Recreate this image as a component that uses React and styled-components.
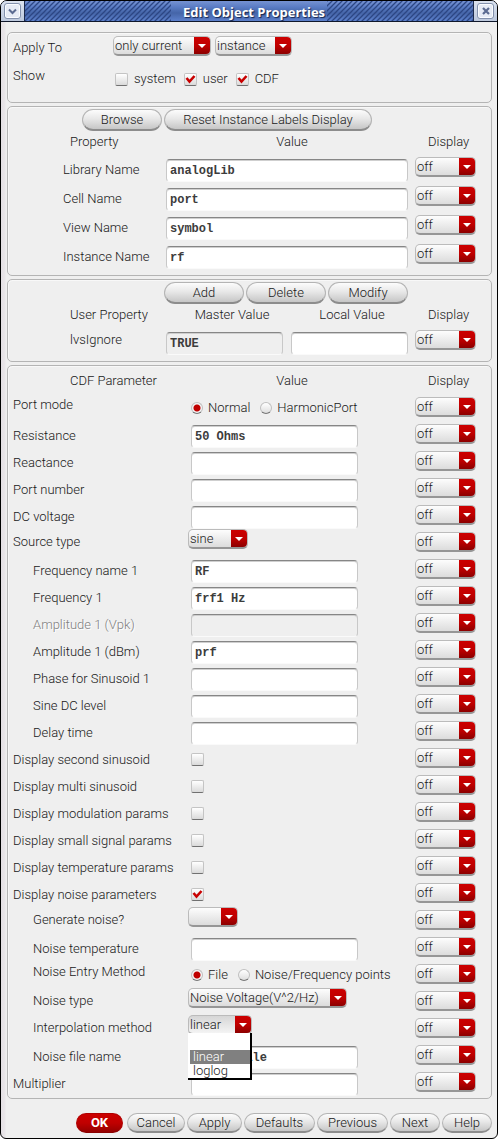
import React from "react";
import styled, { createGlobalStyle } from "styled-components";

const GlobalStyle = createGlobalStyle`
  *, *::before, *::after { box-sizing: border-box; }
  body {
    margin: 0;
    background: #fff;
    color: #181818;
    font: 300 13px/16px Roboto, "Liberation Sans", sans-serif;
  }
  button, select { font: inherit; color: inherit; }
`;

const Window = styled.div`
  border: 1px solid #000;
  border-radius: 7px 7px 6px 6px;
  overflow: hidden;
  background: linear-gradient(90deg, #e4e0e4 0, #e9e6e9 4px, #efefef 5px);
`;

const TitleBar = styled.header`
  display: flex;
  height: 21px;
  border-bottom: 1px solid #10182c;
  background: linear-gradient(#7592d2, #5a7cc4 30%, #4565a8 60%, #5c80cc);
`;

const TitleEnd = styled.div`
  display: flex;
  align-items: center;
  justify-content: center;
  width: 24px;
  background: linear-gradient(#dce3ef, #bcc8dc);
  border: solid #1c2a4c;
  border-width: ${(p) => (p.$right ? "0 0 0 1px" : "0 1px 0 0")};
`;

const TitleButton = styled.button`
  display: flex;
  align-items: center;
  justify-content: center;
  width: 17px;
  height: 16px;
  padding: 0;
  border: 1px solid #8391ad;
  border-radius: 3px;
  background: #e6ebf5;
  box-shadow: inset 0 0 0 1px #fafcff;
`;

const StripeArea = styled.svg`
  flex: 1;
  min-width: 0;
  height: 20px;
`;

const Title = styled.h1`
  margin: 0;
  padding: 0 2px 0 12px;
  font: bold 13px/22px "Open Sans", "DejaVu Sans", sans-serif;
  color: #fff;
  text-shadow: 1px 1px 1px #16254c;
  white-space: nowrap;
`;

const Form = styled.form`
  display: flex;
  flex-direction: column;
  gap: 3px;
  padding: 10px 5px 5px 6px;
`;

const Panel = styled.section`
  border: 1px solid #b4b4b4;
  border-radius: 5px;
  padding: 2px 0 ${(p) => p.$bottom}px;
  box-shadow: inset 1px 1px #f8f8f8;
`;

const Heading = styled.div`
  display: grid;
  grid-template-columns: 158px minmax(0, 1fr) 83px;
  align-items: center;
  height: ${(p) => p.$height}px;
`;

const HeadingName = styled.span`
  padding-left: 62px;
`;

const HeadingValues = styled.span`
  display: flex;
  gap: 8px;
  padding-left: 10px;
  > span { flex: 1; text-align: center; }
`;

const HeadingDisplay = styled.span`
  padding-left: 20px;
`;

const PropertyRow = styled.div`
  display: grid;
  grid-template-columns: 151px minmax(0, 1fr) 76px;
  column-gap: 7px;
  align-items: start;
  height: 29px;
  > :last-child { margin-top: 5px; }
`;

const PropertyLabel = styled.label`
  padding: ${(p) => (p.$user ? "7px 0 0 62px" : "10px 0 0 55px")};
`;

const PropertyValues = styled.div`
  display: flex;
  gap: 8px;
  padding-top: 7px;
`;

const labelTop = { text: 7, radio: 3, select: 5, check: 7 };
const valuePadding = { text: "4px 0 0 3px", radio: "6px 0 0 3px", select: "0", check: "8px 0 0 3px" };

const ParamRow = styled.div`
  display: grid;
  grid-template-columns: 175px minmax(0, 1fr) 76px;
  align-items: start;
  height: 27px;
  padding-left: 5px;
  > :last-child { margin-top: 3px; }
`;

const ParamLabel = styled.label`
  padding: ${(p) => labelTop[p.$kind]}px 0 0 ${(p) => (p.$indent ? 20 : 0)}px;
  color: ${(p) => (p.$dim ? "#808080" : "inherit")};
  text-shadow: ${(p) => (p.$dim ? "1px 1px #fff" : "none")};
  white-space: nowrap;
`;

const ParamValue = styled.div`
  display: flex;
  gap: 10px;
  padding: ${(p) => valuePadding[p.$kind]};
`;

const TextBox = styled.input`
  flex: ${(p) => (p.$narrow ? "0 1 167px" : "1")};
  min-width: 0;
  height: 23px;
  margin: 0;
  padding: 0 3px 0 3px;
  border: 1px solid #c8c8c8;
  border-top-color: #868686;
  border-bottom-color: #fafafa;
  border-radius: 4px;
  background: #fff;
  box-shadow: inset 0 1px #cfcfcf;
  color: #3c3c3c;
  font: bold 12px/16px "Liberation Mono", monospace;
  &:read-only { background: #efefef; }
`;

const SelectFrame = styled.span`
  position: relative;
  display: inline-block;
  width: ${(p) => p.$width}px;
  height: 20px;
  &::before {
    content: "";
    position: absolute;
    top: 1px;
    right: 1px;
    width: 16px;
    height: 17px;
    border-radius: 0 4px 4px 0;
    background: linear-gradient(#cc0000, #c00000 50%, #8c0000);
    pointer-events: none;
  }
  &::after {
    content: "";
    position: absolute;
    top: 8px;
    right: 5px;
    border: solid transparent;
    border-width: 4px 4px 0;
    border-top-color: #fff;
    pointer-events: none;
  }
`;

const SelectControl = styled.select`
  display: block;
  appearance: none;
  width: 100%;
  height: 20px;
  margin: 0;
  padding: 0 16px 0 1px;
  border: 1px solid #bbb;
  border-bottom: 2px solid #969696;
  border-radius: 5px;
  background: ${(p) => (p.$open ? "linear-gradient(#d6d6d6, #f4f4f4)" : "linear-gradient(#fdfdfd, #dcdcdc)")};
  line-height: 16px;
`;

const Popup = styled.ul`
  position: absolute;
  z-index: 2;
  top: 18px;
  left: 0;
  width: 100%;
  margin: 0;
  padding: 3px 0 0 2px;
  border: solid #000;
  border-width: 0 2px 2px 0;
  background: #fff;
  list-style: none;
`;

const PopupItem = styled.li`
  height: 14px;
  padding-left: 3px;
  line-height: 14px;
  background: ${(p) => (p.$active ? "#808080" : "#fff")};
  color: ${(p) => (p.$active ? "#fff" : "inherit")};
`;

const Choice = styled.label`
  display: flex;
  align-items: center;
  gap: ${(p) => p.$gap}px;
  white-space: nowrap;
`;

const Tick = styled.input`
  appearance: none;
  flex: none;
  width: 13px;
  height: 13px;
  margin: 0;
  border: 1px solid #c4c4c4;
  border-bottom-color: #707070;
  border-radius: 2px;
  background: linear-gradient(#fff, #dadada);
`;

const TickFrame = styled.span`
  position: relative;
  display: flex;
  svg { position: absolute; inset: 0; pointer-events: none; }
`;

const Radio = styled.input`
  appearance: none;
  width: 12px;
  height: 12px;
  margin: 0;
  border: 1px solid #c0c0c0;
  border-bottom-color: #777;
  border-radius: 50%;
  background: linear-gradient(#fff, #dedede);
  &:checked { background: radial-gradient(circle, #c00000 0 3px, #f4f4f4 4px); }
`;

const Buttons = styled.div`
  display: flex;
  gap: 2px;
  padding-left: ${(p) => p.$indent}px;
`;

const PillButton = styled.button`
  width: ${(p) => p.$width}px;
  height: 22px;
  padding: 0;
  border: 1px solid #b4b4b4;
  border-bottom: 2px solid #8c8c8c;
  border-radius: 11px;
  background: linear-gradient(#fcfcfc, #e8e8e8 45%, #c6c6c6);
  white-space: nowrap;
`;

const Footer = styled.footer`
  display: flex;
  justify-content: flex-end;
  gap: 2px;
  padding-top: 11px;
`;

const FooterButton = styled(PillButton)`
  height: 20px;
  ${(p) =>
    p.$primary &&
    `
    margin-right: 2px;
    border-color: #b00000;
    border-bottom: 1px solid #8a0000;
    background: linear-gradient(#cc0000, #c00000 50%, #940000);
    color: #fff;
    font-weight: bold;
  `}
`;

function Stripes({ id }) {
  return (
    <StripeArea aria-hidden="true">
      <defs>
        <pattern id={id} width="5" height="5" patternUnits="userSpaceOnUse">
          <path d="M-1 6 L6 -1 M-1 1 L1 -1 M4 6 L6 4" stroke="#2c4684" strokeWidth="1.3" />
        </pattern>
      </defs>
      <rect width="100%" height="100%" fill={`url(#${id})`} />
    </StripeArea>
  );
}

function Select({ id, label, options, width, open }) {
  return (
    <SelectFrame $width={width}>
      <SelectControl id={id} aria-label={label} $open={open} defaultValue={options[0]}>
        {options.map((o) => (
          <option key={o}>{o}</option>
        ))}
      </SelectControl>
      {open && (
        <Popup role="listbox" aria-label="Interpolation choices">
          <PopupItem role="option" />
          <PopupItem role="option" aria-selected="true" $active>linear</PopupItem>
          <PopupItem role="option">loglog</PopupItem>
        </Popup>
      )}
    </SelectFrame>
  );
}

function DisplaySelect({ name }) {
  return <Select label={`${name} display`} options={["off"]} width={61} />;
}

function CheckBox({ id, checked }) {
  return (
    <TickFrame>
      <Tick type="checkbox" id={id} defaultChecked={checked} />
      {checked && (
        <svg width="13" height="13" viewBox="0 0 13 13" aria-hidden="true">
          <path d="M2.5 5 L5.5 8.5 L10.5 3" fill="none" stroke="#c80000" strokeWidth="2.6" />
        </svg>
      )}
    </TickFrame>
  );
}

const properties = [
  ["Library Name", "analogLib"],
  ["Cell Name", "port"],
  ["View Name", "symbol"],
  ["Instance Name", "rf"],
];

const params = [
  { name: "Port mode", kind: "radio", options: ["Normal", "HarmonicPort"] },
  { name: "Resistance", kind: "text", value: "50 Ohms" },
  { name: "Reactance", kind: "text" },
  { name: "Port number", kind: "text" },
  { name: "DC voltage", kind: "text" },
  { name: "Source type", kind: "select", options: ["sine"], width: 60 },
  { name: "Frequency name 1", kind: "text", value: "RF", indent: true },
  { name: "Frequency 1", kind: "text", value: "frf1 Hz", indent: true },
  { name: "Amplitude 1 (Vpk)", kind: "text", indent: true, dim: true },
  { name: "Amplitude 1 (dBm)", kind: "text", value: "prf", indent: true },
  { name: "Phase for Sinusoid 1", kind: "text", indent: true },
  { name: "Sine DC level", kind: "text", indent: true },
  { name: "Delay time", kind: "text", indent: true },
  { name: "Display second sinusoid", kind: "check" },
  { name: "Display multi sinusoid", kind: "check" },
  { name: "Display modulation params", kind: "check" },
  { name: "Display small signal params", kind: "check" },
  { name: "Display temperature params", kind: "check" },
  { name: "Display noise parameters", kind: "check", checked: true },
  { name: "Generate noise?", kind: "select", options: [""], width: 50, indent: true },
  { name: "Noise temperature", kind: "text", indent: true },
  { name: "Noise Entry Method", kind: "radio", options: ["File", "Noise/Frequency points"], indent: true },
  { name: "Noise type", kind: "select", options: ["Noise Voltage(V^2/Hz)"], width: 159, indent: true },
  { name: "Interpolation method", kind: "select", options: ["linear", "loglog"], width: 64, indent: true, open: true },
  { name: "Noise file name", kind: "text", value: "noise_file", indent: true },
  { name: "Multiplier", kind: "text" },
];

function ParamField({ param, id }) {
  switch (param.kind) {
    case "radio":
      return param.options.map((o, i) => (
        <Choice key={o} $gap={5}>
          <Radio type="radio" name={id} id={i === 0 ? id : undefined} defaultChecked={i === 0} />
          {o}
        </Choice>
      ));
    case "select":
      return <Select id={id} options={param.options} width={param.width} open={param.open} />;
    case "check":
      return <CheckBox id={id} checked={param.checked} />;
    default:
      return <TextBox id={id} $narrow defaultValue={param.value} readOnly={param.dim} />;
  }
}

const ApplyGrid = styled.div`
  display: grid;
  grid-template-columns: 100px 1fr;
  grid-template-rows: 28px 36px;
  align-items: start;
  padding-left: 5px;
`;

const ApplyLabel = styled.span`
  padding-top: 5px;
`;

const ApplyControls = styled.div`
  display: flex;
  gap: ${(p) => p.$gap}px;
  padding: ${(p) => p.$padding};
`;

export default function App() {
  return (
    <>
      <GlobalStyle />
      <Window>
        <TitleBar>
          <TitleEnd>
            <TitleButton aria-label="Window menu">
              <svg width="9" height="7" viewBox="0 0 9 7">
                <path d="M1 1.5 L4.5 5 L8 1.5" fill="none" stroke="#5b6b91" strokeWidth="2" />
              </svg>
            </TitleButton>
          </TitleEnd>
          <Stripes id="stripes-left" />
          <Title>Edit Object Properties</Title>
          <Stripes id="stripes-right" />
          <TitleEnd $right>
            <TitleButton aria-label="Close">
              <svg width="8" height="8" viewBox="0 0 8 8">
                <path d="M1 1 L7 7 M7 1 L1 7" stroke="#5b6b91" strokeWidth="2.2" />
              </svg>
            </TitleButton>
          </TitleEnd>
        </TitleBar>
        <Form onSubmit={(e) => e.preventDefault()}>
          <Panel $bottom={3}>
            <ApplyGrid>
              <ApplyLabel>Apply To</ApplyLabel>
              <ApplyControls $gap={4} $padding="1px 0 0">
                <Select label="Apply to" options={["only current"]} width={98} />
                <Select label="Object type" options={["instance"]} width={77} />
              </ApplyControls>
              <ApplyLabel>Show</ApplyLabel>
              <ApplyControls $gap={8} $padding="8px 0 0 2px">
                <Choice $gap={6}><CheckBox />system</Choice>
                <Choice $gap={6}><CheckBox checked />user</Choice>
                <Choice $gap={6}><CheckBox checked />CDF</Choice>
              </ApplyControls>
            </ApplyGrid>
          </Panel>

          <Panel $bottom={7}>
            <Buttons $indent={74}>
              <PillButton type="button" $width={80}>Browse</PillButton>
              <PillButton type="button" $width={208}>Reset Instance Labels Display</PillButton>
            </Buttons>
            <Heading $height={21}>
              <HeadingName>Property</HeadingName>
              <HeadingValues><span>Value</span></HeadingValues>
              <HeadingDisplay>Display</HeadingDisplay>
            </Heading>
            {properties.map(([name, value]) => (
              <PropertyRow key={name}>
                <PropertyLabel htmlFor={name}>{name}</PropertyLabel>
                <PropertyValues><TextBox id={name} defaultValue={value} /></PropertyValues>
                <DisplaySelect name={name} />
              </PropertyRow>
            ))}
          </Panel>

          <Panel $bottom={7}>
            <Buttons $indent={156}>
              <PillButton type="button" $width={80}>Add</PillButton>
              <PillButton type="button" $width={80}>Delete</PillButton>
              <PillButton type="button" $width={80}>Modify</PillButton>
            </Buttons>
            <Heading $height={21}>
              <HeadingName>User Property</HeadingName>
              <HeadingValues><span>Master Value</span><span>Local Value</span></HeadingValues>
              <HeadingDisplay>Display</HeadingDisplay>
            </Heading>
            <PropertyRow>
              <PropertyLabel $user htmlFor="lvsIgnore">lvsIgnore</PropertyLabel>
              <PropertyValues>
                <TextBox id="lvsIgnore" defaultValue="TRUE" readOnly />
                <TextBox aria-label="lvsIgnore local value" />
              </PropertyValues>
              <DisplaySelect name="lvsIgnore" />
            </PropertyRow>
          </Panel>

          <Panel $bottom={2}>
            <Heading $height={26}>
              <HeadingName>CDF Parameter</HeadingName>
              <HeadingValues><span>Value</span></HeadingValues>
              <HeadingDisplay>Display</HeadingDisplay>
            </Heading>
            {params.map((param, i) => (
              <ParamRow key={param.name}>
                <ParamLabel htmlFor={`param-${i}`} $kind={param.kind} $indent={param.indent} $dim={param.dim}>
                  {param.name}
                </ParamLabel>
                <ParamValue $kind={param.kind}>
                  <ParamField param={param} id={`param-${i}`} />
                </ParamValue>
                <DisplaySelect name={param.name} />
              </ParamRow>
            ))}
          </Panel>

          <Footer>
            <FooterButton $primary $width={47}>OK</FooterButton>
            <FooterButton type="button" $width={58}>Cancel</FooterButton>
            <FooterButton type="button" $width={55}>Apply</FooterButton>
            <FooterButton type="button" $width={71}>Defaults</FooterButton>
            <FooterButton type="button" $width={71}>Previous</FooterButton>
            <FooterButton type="button" $width={50}>Next</FooterButton>
            <FooterButton type="button" $width={50}>Help</FooterButton>
          </Footer>
        </Form>
      </Window>
    </>
  );
}
